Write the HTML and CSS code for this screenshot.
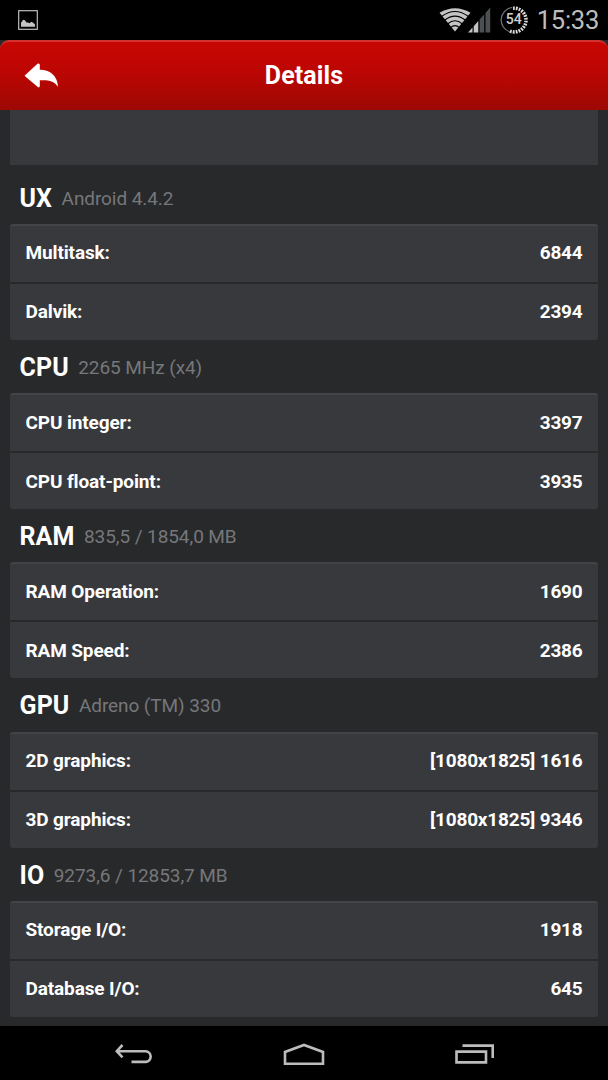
FILE: index.html
```html
<!DOCTYPE html>
<html lang="en">
<head>
<meta charset="utf-8">
<title>Details</title>
<link rel="stylesheet" href="styles.css">
</head>
<body>
<div class="screen">
  <div class="status">
    <svg class="status-picture" width="20" height="20" viewBox="0 0 20 20"><rect x=".7" y=".7" width="18.6" height="18.6" fill="none" stroke="#bdbdbd" stroke-width="1.2"/><path d="M3 16.800V12.500Q4 12 4.500 10.500Q5.700 9 7 10.500L8.500 12.500H10L11.500 13.200L13.500 11.800L15.500 13L17 14.500V16.800z" fill="#c4c4c4"/></svg>
    <div class="status-right">
      <svg class="wifi" width="32" height="24" viewBox="0 0 32 24"><path d="M16 23.500L.5 4.800Q16-4.500 31.500 4.800z" fill="#c4c4c4"/><g fill="none" stroke="#000" stroke-width="1.100"><path d="M2.500 8.500Q16-1.500 29.500 8.500M5.500 12.300Q16 4 26.500 12.300M8.500 16Q16 9.600 23.500 16M11.500 19.600Q16 15.500 20.500 19.600"/></g></svg>
      <svg class="signal" width="23" height="26" viewBox="0 0 23 26"><path d="M0 25.500L4.500 20.500V25.500zM5.700 19.200L10.300 14V25.500H5.700z" fill="#c4c4c4"/><path d="M11.600 12.600L16.200 7.400V25.500H11.600zM17.500 6L22.200.5V25.500H17.500z" fill="#4d5052"/></svg>
      <div class="battery">
        <svg width="28" height="28" viewBox="0 0 28 28"><path d="M12 1.500A12.600 12.600 0 0 0 10 26" fill="none" stroke="#777" stroke-width="1.200"/><path d="M13 2.200A11.900 11.900 0 1 1 10 25.200" fill="none" stroke="#ddd" stroke-width="3.500" stroke-dasharray="1.800 1.100"/></svg>
        <span>54</span>
      </div>
      <span class="clock">15:33</span>
    </div>
  </div>
  <div class="header">
    <svg class="header-back" width="36" height="26" viewBox="0 0 36 26"><path d="M1 12.200L13.500.8Q15.800-.2 15.800 2V6.700C25 6.500 33.500 12 34 23.800C30.500 18 25 16.800 15.800 17.200V23Q15.500 25.300 13.500 23.800L1 13.200Q.4 12.700 1 12.200z" fill="#fff"/></svg>
    <span class="header-title">Details</span>
  </div>
  <div class="content">
    <div class="card-stub"></div>
    <div class="section"><div class="heading"><b>UX</b><span>Android 4.4.2</span></div>
      <div class="card"><div class="row"><span>Multitask:</span><span>6844</span></div><div class="row"><span>Dalvik:</span><span>2394</span></div></div></div>
    <div class="section"><div class="heading"><b>CPU</b><span>2265 MHz (x4)</span></div>
      <div class="card"><div class="row"><span>CPU integer:</span><span>3397</span></div><div class="row"><span>CPU float-point:</span><span>3935</span></div></div></div>
    <div class="section"><div class="heading"><b>RAM</b><span>835,5 / 1854,0 MB</span></div>
      <div class="card"><div class="row"><span>RAM Operation:</span><span>1690</span></div><div class="row"><span>RAM Speed:</span><span>2386</span></div></div></div>
    <div class="section"><div class="heading"><b>GPU</b><span>Adreno (TM) 330</span></div>
      <div class="card"><div class="row"><span>2D graphics:</span><span>[1080x1825] 1616</span></div><div class="row"><span>3D graphics:</span><span>[1080x1825] 9346</span></div></div></div>
    <div class="section"><div class="heading"><b>IO</b><span>9273,6 / 12853,7 MB</span></div>
      <div class="card"><div class="row"><span>Storage I/O:</span><span>1918</span></div><div class="row"><span>Database I/O:</span><span>645</span></div></div></div>
  </div>
  <div class="nav">
    <svg width="38" height="20" viewBox="0 0 38 20"><path d="M2 7.200H31a5.400 5.400 0 0 1 0 10.700H16.500M7.500 1L1.800 7.200L7.500 13.400" fill="none" stroke="#bcbcbc" stroke-width="2.600"/></svg>
    <svg width="42" height="23" viewBox="0 0 42 23"><path d="M2 20.800V9L21 2L40 9V20.800z" fill="none" stroke="#bcbcbc" stroke-width="2.600"/></svg>
    <svg width="40" height="20" viewBox="0 0 40 20"><path d="M1.500 7.600H31V18.400H1.500zM7.500 1.600H37.700V14" fill="none" stroke="#bcbcbc" stroke-width="2.600"/></svg>
  </div>
</div>
</body>
</html>
```
FILE: styles.css
```css
body { margin: 0; background: #000; font-family: Roboto, "Liberation Sans", sans-serif; }
.screen { width: 608px; height: 1080px; display: flex; flex-direction: column; overflow: hidden; background: #28292b; }
.status { flex: none; height: 40px; background: #000; display: flex; justify-content: space-between; align-items: flex-start; box-sizing: border-box; padding: 0 9px 0 18px; }
.status-picture { margin-top: 10px; }
.status-right { display: flex; align-items: flex-start; }
.wifi { margin-top: 8px; }
.signal { margin: 7px 9px 0 -3px; }
.battery { width: 28px; height: 28px; margin: 6px 9px 0 0; display: grid; place-items: center; }
.battery > * { grid-area: 1 / 1; }
.battery span { color: #d0d0d0; font-size: 14px; line-height: 26px; padding-bottom: 2px; font-weight: 500; }
.clock { color: #bdbdbd; font-size: 25.500px; line-height: 41px; letter-spacing: -0.25px; }
.header { flex: none; height: 70px; box-sizing: border-box; padding: 0 24px; border-top: 2px solid #d03330; border-radius: 9px 9px 0 0; background: linear-gradient(#c80603, #bc0603 45%, #9d0803); display: grid; align-items: center; }
.header > * { grid-area: 1 / 1; }
.header-back { margin-bottom: 1px; }
.header-title { justify-self: center; color: #fff; font-size: 25px; line-height: 30px; font-weight: 700; letter-spacing: 0.1px; }
.content { flex: none; height: 916px; box-sizing: border-box; padding: 0 10px; overflow: hidden; }
.card-stub { height: 54.500px; margin-bottom: 6px; background: #38393c; }
.heading { height: 53.250px; box-sizing: border-box; padding: 3px 9.500px 0; display: flex; align-items: center; gap: 9.500px; line-height: 30px; }
.heading b { color: #fff; font-size: 25px; font-weight: 700; letter-spacing: 0.1px; }
.heading span { color: #76777a; font-size: 19px; letter-spacing: -0.08px; }
.card { height: 116px; box-sizing: border-box; border-radius: 3px; background: #38393c; overflow: hidden; border-top: 2px solid #434447; }
.row { height: 56px; box-sizing: border-box; padding: 0 16px 1px 15.500px; display: flex; justify-content: space-between; align-items: center; color: #fff; font-size: 19px; line-height: 24px; font-weight: 700; letter-spacing: -0.13px; font-variant-ligatures: none; }
.row span:last-child { margin-right: -0.500px; letter-spacing: -0.2px; }
.row + .row { height: 58px; padding-top: 1px; padding-bottom: 0; border-top: 2px solid #28292b; }
.nav { flex: 1; background: #000; display: grid; grid-template-columns: 38px 42px 40px; column-gap: 130px; align-items: center; padding: 2px 0 0 115px; }
```
